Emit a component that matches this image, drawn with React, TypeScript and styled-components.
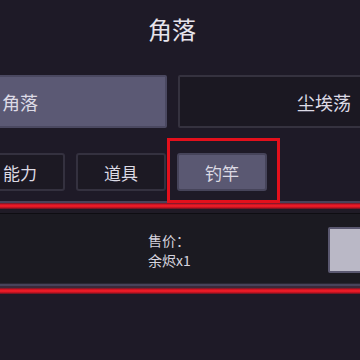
import React from "react";
import styled, { createGlobalStyle } from "styled-components";

const Global = createGlobalStyle`
  html, body { margin: 0; padding: 0; background: #1e1a27; }
  body { font-family: "Noto Sans CJK SC", "Noto Sans", sans-serif; }
`;

const Screen = styled.div`
  width: 360px;
  height: 360px;
  overflow: hidden;
  background: #1e1a27;
`;

const Stage = styled.div`
  width: 394px;
  margin-left: -25px;
  display: flex;
  flex-direction: column;
`;

const Title = styled.div`
  height: 58px;
  line-height: 58px;
  text-align: center;
  font-size: 24px;
  color: #e6e4ec;
`;

const TabRow = styled.div`
  margin-top: 17px;
  height: 53px;
  display: grid;
  grid-template-columns: 1fr 1fr;
  gap: 11px;
`;

const Tab = styled.div<{ $active?: boolean; $align: "left" | "right" }>`
  box-sizing: border-box;
  display: flex;
  align-items: center;
  justify-content: ${(p) => (p.$align === "left" ? "flex-start" : "flex-end")};
  padding: ${(p) => (p.$align === "left" ? "0 0 0 25px" : "0 16px 0 0")};
  font-size: 18px;
  color: #dddbe6;
  border-radius: 2px;
  background: ${(p) => (p.$active ? "#5b5974" : "#1b1822")};
  border: 2px solid ${(p) => (p.$active ? "#4a4860" : "#35323f")};
`;

const SubRow = styled.div`
  margin-top: 25px;
  height: 38px;
  display: flex;
  gap: 11px;
`;

const SubWrap = styled.div`
  position: relative;
  width: 90px;
  display: flex;
`;

const SubButton = styled.div<{ $active?: boolean }>`
  box-sizing: border-box;
  flex: 1;
  display: flex;
  align-items: center;
  justify-content: center;
  font-size: 17px;
  color: #dcdae4;
  border-radius: 3px;
  background: ${(p) => (p.$active ? "#5a5872" : "#1c1923")};
  border: 2px solid ${(p) => (p.$active ? "#46445a" : "#34313f")};
`;

const Highlight = styled.div`
  position: absolute;
  left: -10px;
  right: -13px;
  top: -15px;
  bottom: -12px;
  border: 3px solid #e3101c;
  pointer-events: none;
`;

const EdgeLine = styled.div`
  height: 2px;
  background: #48435a;
`;

const RedLine = styled.div`
  height: 6px;
  background: linear-gradient(
    to bottom,
    #6a1a2a 0%,
    #e01422 30%,
    #f0202a 50%,
    #d41220 70%,
    #5a1624 100%
  );
`;

const Gap = styled.div<{ $h: number; $c: string }>`
  height: ${(p) => p.$h}px;
  background: ${(p) => p.$c};
`;

const Panel = styled.div`
  height: 69px;
  background: #1b1a21;
  display: flex;
  align-items: flex-start;
  padding-left: 173px;
`;

const Price = styled.div`
  flex: 0 0 180px;
  padding-top: 16px;
  font-size: 14px;
  line-height: 20px;
  color: #d6d4de;
`;

const ItemBox = styled.div`
  flex: 0 0 50px;
  box-sizing: border-box;
  margin-top: 13px;
  height: 46px;
  background: #bab8c6;
  border: 2px solid #5a5870;
  border-radius: 2px;
`;

export default function App() {
  return (
    <Screen>
      <Global />
      <Stage>
        <Title>角落</Title>
        <TabRow>
          <Tab $active $align="left">角落</Tab>
          <Tab $align="right">尘埃荡</Tab>
        </TabRow>
        <SubRow>
          <SubWrap>
            <SubButton>能力</SubButton>
          </SubWrap>
          <SubWrap>
            <SubButton>道具</SubButton>
          </SubWrap>
          <SubWrap>
            <SubButton $active>钓竿</SubButton>
            <Highlight />
          </SubWrap>
        </SubRow>
        <Gap $h={10} $c="#1e1a27" />
        <EdgeLine />
        <RedLine />
        <Gap $h={4} $c="#1f1b26" />
        <Gap $h={1} $c="#0e0d12" />
        <Panel>
          <Price>
            <div>售价：</div>
            <div>余烬x1</div>
          </Price>
          <ItemBox />
        </Panel>
        <Gap $h={1} $c="#2a2733" />
        <EdgeLine />
        <Gap $h={2} $c="#3b2a3a" />
        <RedLine />
      </Stage>
    </Screen>
  );
}
